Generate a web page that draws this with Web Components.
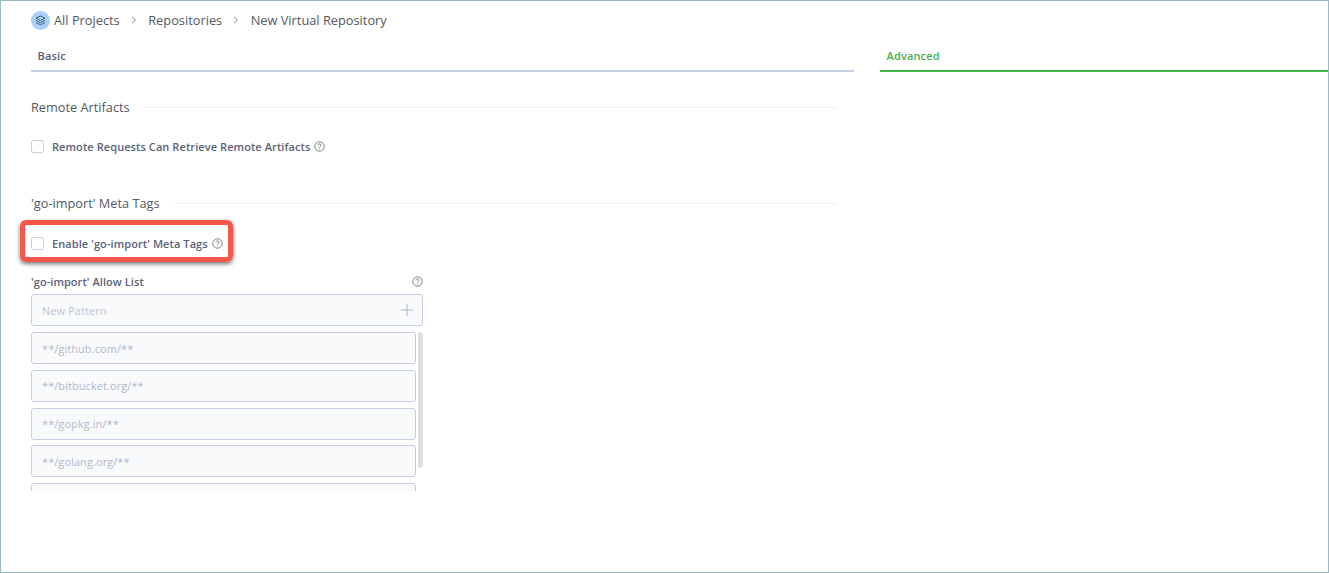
<!DOCTYPE html>
<html><head><meta charset="utf-8"><style>
html,body{margin:0;padding:0;background:#fff}
body{font-family:"Open Sans","Liberation Sans",sans-serif}
</style></head><body>
<template id="t-crumbs"><style>
:host{display:flex;align-items:center;height:38px;font-size:12.8px;color:#53585f}
.ic{width:19px;height:19px;border-radius:50%;background:#a9d0f7;display:flex;align-items:center;justify-content:center;margin-right:4px}
.sep{width:28.5px;display:flex;justify-content:center}
</style>
<span class="ic"><svg width="11" height="11" viewBox="0 0 11 11" fill="none" stroke="#3f5f80" stroke-width="1"><path d="M5.5 1 10 3.2 5.5 5.4 1 3.2Z"/><path d="M1 5.4 5.5 7.6 10 5.4"/><path d="M1 7.6 5.5 9.8 10 7.6"/></svg></span>
<span>All Projects</span>
<span class="sep"><svg width="6" height="8" viewBox="0 0 6 8" fill="none" stroke="#8b9199" stroke-width="1"><path d="M1 .8 4.6 4 1 7.2"/></svg></span>
<span>Repositories</span>
<span class="sep"><svg width="6" height="8" viewBox="0 0 6 8" fill="none" stroke="#8b9199" stroke-width="1"><path d="M1 .8 4.6 4 1 7.2"/></svg></span>
<span>New Virtual Repository</span></template>

<template id="t-tab"><style>
:host{display:flex;align-items:center;box-sizing:border-box;height:31px;padding:0 6.5px;font-size:11px;font-weight:600;letter-spacing:.15px;color:#555d72;border-bottom:2px solid #c6d0e2}
:host([active]){color:#48ad52;border-bottom-color:#41b649}
</style><slot></slot></template>

<template id="t-section"><style>
:host{display:flex;align-items:center;gap:14px;font-size:12.75px;color:#53585f;width:806px}
i{flex:1;height:1px;background:#eff1f4}
</style><slot></slot><i></i></template>

<template id="t-help"><style>:host{display:inline-flex}</style>
<svg width="11" height="11" viewBox="0 0 11 11" fill="none" stroke="#5a616d" stroke-width=".8"><circle cx="5.5" cy="5.5" r="4.7"/><path d="M4 4.3C4 2.4 7 2.4 7 4.2 7 5.3 5.5 5.3 5.5 6.6"/><path d="M5.5 7.7V8.5"/></svg></template>

<template id="t-check"><style>
:host{display:flex;align-items:center;font-size:11px;font-weight:600;letter-spacing:.08px;color:#5b6278}
.b{box-sizing:border-box;width:13px;height:13px;border:1px solid #c6cce0;border-radius:2.5px;background:#fff;margin-right:8px}
::slotted(x-help){margin-left:4px}
</style><span class="b"></span><slot></slot></template>

<template id="t-field"><style>
:host{display:flex;align-items:center;justify-content:space-between;box-sizing:border-box;height:32px;padding:0 10px;background:#f9fafc;border:1px solid #c7cde3;border-radius:3px;font-size:11px;letter-spacing:.07px;color:#b3b8cc;flex:none}
</style><slot></slot></template>

<template id="t-allow"><style>
:host{display:block;width:392px}
.lab{display:flex;justify-content:space-between;align-items:center;font-size:11px;font-weight:600;letter-spacing:.06px;color:#5b6278;height:16px;margin-bottom:5px}
.plus{display:block;margin-right:-1px}
.wrap{display:flex;gap:1px;height:159px;overflow:hidden;margin-top:6px}
.list{width:385px;display:flex;flex-direction:column;gap:5.75px}
.bar{width:5px;height:136px;background:#dedede;border-radius:2px;margin-left:1px}
x-field.new{color:#c0c5d6}
</style>
<div class="lab"><span>'go-import' Allow List</span><x-help></x-help></div>
<x-field class="new"><span>New Pattern</span><svg class="plus" width="12" height="12" viewBox="0 0 12 12" stroke="#aab0c6" stroke-width="1"><path d="M6 0V12M0 6H12"/></svg></x-field>
<div class="wrap"><div class="list">
<x-field>**/github.com/**</x-field><x-field>**/bitbucket.org/**</x-field><x-field>**/gopkg.in/**</x-field><x-field>**/golang.org/**</x-field><x-field></x-field>
</div><div class="bar"></div></div></template>

<template id="t-mark"><style>
:host{position:absolute;left:19px;top:219px;width:213px;height:42px;box-sizing:border-box;border:5px solid #f8554b;border-radius:6px;box-shadow:0 2px 4px rgba(0,0,0,.55)}
</style></template>

<template id="t-app"><style>
:host{display:block;position:relative;box-sizing:border-box;width:1329px;height:573px;border:1px solid #9ab9c7;padding-left:30px;overflow:hidden;background:#fff}
.tabs{display:grid;grid-template-columns:823px 1fr;gap:26px;margin-top:2px}
.s1{margin-top:26px}
.c1{margin-top:23px}
.s2{margin-top:40px}
.c2{margin-top:24px}
.al{margin-top:22px;display:block}
</style>
<x-crumbs></x-crumbs>
<div class="tabs"><x-tab>Basic</x-tab><x-tab active>Advanced</x-tab></div>
<x-section class="s1">Remote Artifacts</x-section>
<x-check class="c1">Remote Requests Can Retrieve Remote Artifacts<x-help></x-help></x-check>
<x-section class="s2">'go-import' Meta Tags</x-section>
<x-check class="c2">Enable 'go-import' Meta Tags<x-help></x-help></x-check>
<x-allow class="al"></x-allow>
<x-mark></x-mark></template>

<x-app></x-app>
<script>
for (const n of ['crumbs','tab','section','help','check','field','allow','mark','app']) {
  customElements.define('x-'+n, class extends HTMLElement {
    constructor(){super();this.attachShadow({mode:'open'}).appendChild(document.getElementById('t-'+n).content.cloneNode(true));}
  });
}
</script>
</body></html>
